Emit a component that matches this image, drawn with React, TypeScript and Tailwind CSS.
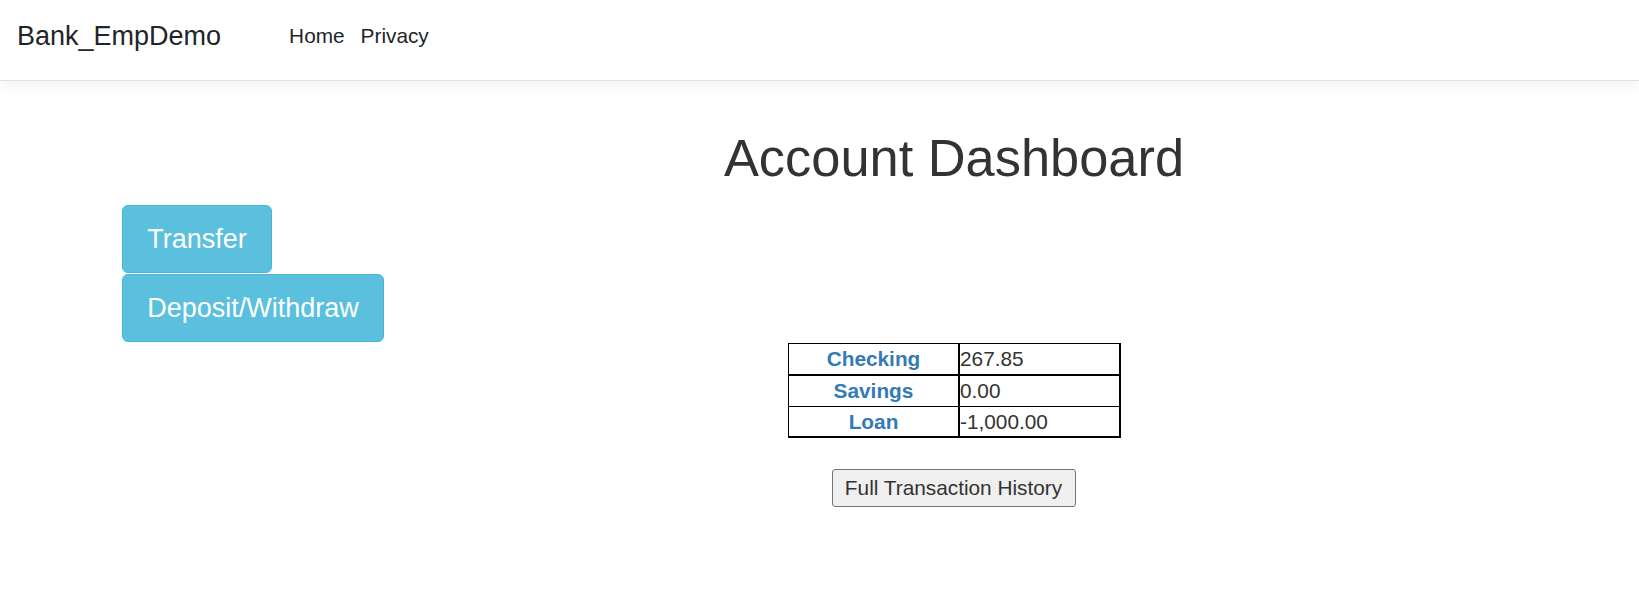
import React from "react";

const rows = [
  { label: "Checking", value: "267.85" },
  { label: "Savings", value: "0.00" },
  { label: "Loan", value: "-1,000.00" },
];

export default function App() {
  return (
    <div className="min-h-screen bg-white font-['Liberation_Sans',Arial,sans-serif] text-[#333333]">
      <header className="relative z-10 h-[81px] border-b border-[#dee2e6] bg-white shadow-[0_5px_15px_rgba(0,0,0,0.05)]">
        <nav className="flex h-[80px] items-center pb-[8px] pl-[17px]">
          <a className="text-[27px] leading-[27px] text-[#212529]">Bank_EmpDemo</a>
          <ul className="mb-[1px] ml-[68px] flex gap-[16px] text-[20.8px] leading-[21px] text-[#212529]">
            <li>
              <a>Home</a>
            </li>
            <li>
              <a>Privacy</a>
            </li>
          </ul>
        </nav>
      </header>

      <main>
        <h1 className="mt-[46px] pl-[269px] text-center text-[52.4px] font-normal leading-[62px] text-[#333333]">
          Account Dashboard
        </h1>

        <div className="mt-[16px] flex flex-col items-start gap-[1px] pl-[122px]">
          <button className="flex h-[68px] w-[150px] items-center justify-center rounded-[6px] border border-[#46b8da] bg-[#5bc0de] text-[27px] leading-[27px] text-white">
            Transfer
          </button>
          <button className="flex h-[68px] w-[262px] items-center justify-center rounded-[6px] border border-[#46b8da] bg-[#5bc0de] text-[27px] leading-[27px] text-white">
            Deposit/Withdraw
          </button>
        </div>

        <div className="mt-[1px] flex justify-center pl-[270px]">
          <div className="flex flex-col text-[20.8px]">
            {rows.map((r, i) => {
              const rowCls =
                i === 0
                  ? "h-[33px] border-t border-b-2"
                  : i === 1
                  ? "h-[31px] border-b"
                  : "h-[31px] border-b-2";
              return (
                <div key={r.label} className={`flex border-black ${rowCls}`}>
                  <div className="flex w-[172px] items-center justify-center border-l border-r-2 border-black font-bold leading-[24px] text-[#337ab7]">
                    {r.label}
                  </div>
                  <div className="flex w-[161px] items-center border-r-2 border-black leading-[24px] text-[#333333]">
                    {r.value}
                  </div>
                </div>
              );
            })}
          </div>
        </div>

        <div className="mt-[31px] flex justify-center pl-[268px]">
          <button className="flex h-[38px] w-[244px] items-center justify-center rounded-[3px] border border-[#767676] bg-[#efefef] text-[20.8px] leading-[24px] text-[#333333]">
            Full Transaction History
          </button>
        </div>
      </main>
    </div>
  );
}
